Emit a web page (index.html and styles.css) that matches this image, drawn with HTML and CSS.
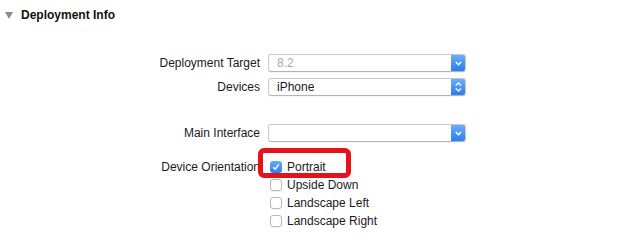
FILE: index.html
```html
<!DOCTYPE html>
<html lang="en">
<head>
    <meta charset="UTF-8">
    <title>Deployment Info</title>
    <link rel="stylesheet" href="styles.css">
</head>
<body>
    <div class="section">
        <div class="section-header">
            <svg class="disclosure" width="8" height="7" viewBox="0 0 8 7">
                <path d="M0 0 L8 0 L4 7 Z" fill="#8c8c8c"/>
            </svg>
            <span class="section-title">Deployment Info</span>
        </div>

        <div class="form">
            <div class="label row-target">Deployment Target</div>
            <div class="popup row-target disabled">
                <span class="popup-value">8.2</span>
                <span class="popup-btn">
                    <svg width="7" height="5" viewBox="0 0 7 5"><path d="M0.8 1 L3.5 3.8 L6.2 1" fill="none" stroke="#fff" stroke-width="1.4"/></svg>
                </span>
            </div>

            <div class="label row-devices">Devices</div>
            <div class="popup row-devices">
                <span class="popup-value">iPhone</span>
                <span class="popup-btn">
                    <svg width="7" height="10" viewBox="0 0 7 10"><path d="M0.8 3.6 L3.5 1 L6.2 3.6 M0.8 6.4 L3.5 9 L6.2 6.4" fill="none" stroke="#fff" stroke-width="1.3"/></svg>
                </span>
            </div>

            <div class="label row-main">Main Interface</div>
            <div class="popup row-main">
                <span class="popup-value"></span>
                <span class="popup-btn">
                    <svg width="7" height="5" viewBox="0 0 7 5"><path d="M0.8 1 L3.5 3.8 L6.2 1" fill="none" stroke="#fff" stroke-width="1.4"/></svg>
                </span>
            </div>

            <div class="label row-orient">Device Orientation</div>
            <div class="options row-orient">
                <div class="option highlighted">
                    <span class="checkbox checked">
                        <svg width="8" height="8" viewBox="0 0 8 8"><path d="M1.2 4.2 L3.2 6.2 L6.8 1.4" fill="none" stroke="#fff" stroke-width="1.5"/></svg>
                    </span>
                    <span>Portrait</span>
                    <div class="callout"></div>
                </div>
                <div class="option"><span class="checkbox"></span><span>Upside Down</span></div>
                <div class="option"><span class="checkbox"></span><span>Landscape Left</span></div>
                <div class="option"><span class="checkbox"></span><span>Landscape Right</span></div>
            </div>
        </div>
    </div>
</body>
</html>
```

FILE: styles.css
```css
* {
    margin: 0;
    padding: 0;
    box-sizing: border-box;
}

body {
    background: #fff;
    color: #1a1a1a;
    font-family: 'Liberation Sans', Arial, sans-serif;
    font-size: 12px;
    width: 621px;
    height: 240px;
    overflow: hidden;
}

.section-header {
    display: flex;
    align-items: center;
    gap: 8px;
    height: 31px;
    padding-left: 5px;
    padding-bottom: 1px;
}

.section-title {
    font-weight: 700;
    font-size: 12px;
    color: #111;
}

.form {
    display: grid;
    grid-template-columns: 260px 198px;
    column-gap: 8px;
    margin-top: 23px;
}

.label {
    text-align: right;
    height: 18px;
    line-height: 18px;
    white-space: nowrap;
}

.row-devices {
    margin-top: 6px;
}

.row-main {
    margin-top: 28px;
}

.row-orient {
    margin-top: 16px;
}

.popup {
    display: flex;
    align-items: stretch;
    height: 18px;
    border: 1px solid #c9c9c9;
    border-bottom-color: #b4b4b4;
    border-radius: 3px;
    background: #fff;
    box-shadow: 0 1px 0 rgba(0, 0, 0, 0.04);
    overflow: hidden;
}

.popup-value {
    flex: 1;
    padding-left: 8px;
    line-height: 16px;
    color: #1a1a1a;
}

.popup.disabled .popup-value {
    color: #a8a8a8;
}

.popup-btn {
    width: 14px;
    display: flex;
    align-items: center;
    justify-content: center;
    background: linear-gradient(#6aaefa, #2a7df2);
}

.options {
    display: flex;
    flex-direction: column;
}

.option {
    position: relative;
    display: flex;
    align-items: center;
    gap: 5px;
    height: 18px;
    padding-left: 2px;
}

.checkbox {
    width: 12px;
    height: 12px;
    border: 1px solid #b8b8b8;
    border-radius: 3px;
    background: #fff;
    box-shadow: 0 1px 0 rgba(0, 0, 0, 0.05);
    display: flex;
    align-items: center;
    justify-content: center;
}

.checkbox.checked {
    border: none;
    background: linear-gradient(#67acfa, #2c7ff3);
}

.callout {
    position: absolute;
    left: -10px;
    top: -10px;
    width: 93px;
    height: 30px;
    border: 5px solid #e5121c;
    border-radius: 6px;
}
```
